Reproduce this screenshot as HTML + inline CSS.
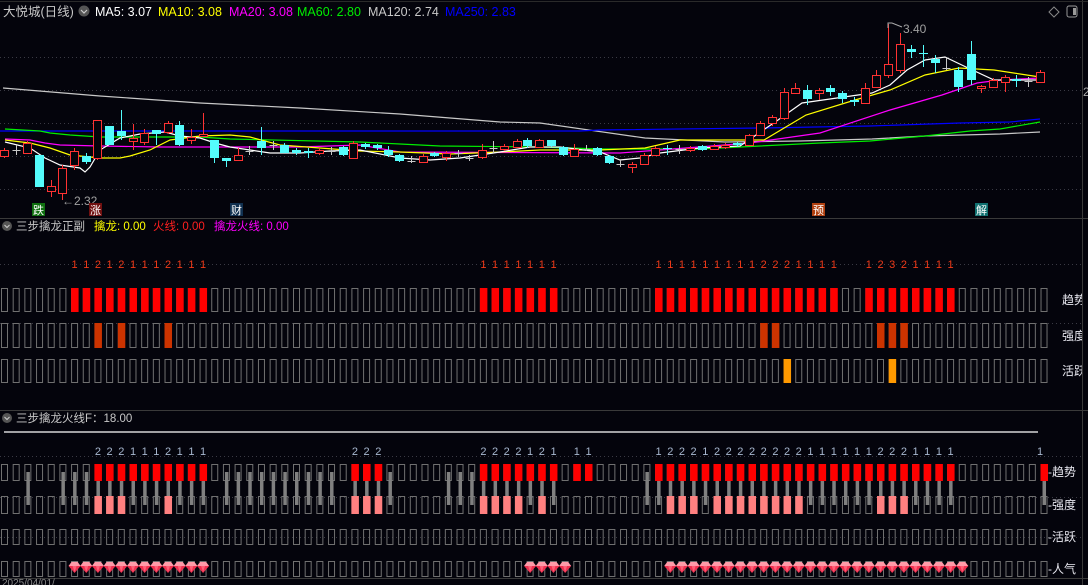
<!DOCTYPE html>
<html><head><meta charset="utf-8">
<style>
html,body{margin:0;padding:0;background:#04040c;overflow:hidden}
svg{display:block}
text{font-family:"Liberation Sans","Noto Sans CJK SC",sans-serif}
</style></head>
<body>
<svg id="s" width="1088" height="585" viewBox="0 0 1088 585" xmlns="http://www.w3.org/2000/svg">
<rect width="1088" height="585" fill="#04040c"/>
<g stroke="#3a3a44" stroke-dasharray="1,3" stroke-width="1">
<line x1="0" y1="57.5" x2="1082" y2="57.5"/>
<line x1="0" y1="90.5" x2="1082" y2="90.5"/>
<line x1="0" y1="123.5" x2="1082" y2="123.5"/>
<line x1="0" y1="156.5" x2="1082" y2="156.5"/>
<line x1="0" y1="189.5" x2="1082" y2="189.5"/>
<line x1="0" y1="264.5" x2="1082" y2="264.5"/>
<line x1="0" y1="323.5" x2="1082" y2="323.5"/>
<line x1="0" y1="456.5" x2="1082" y2="456.5"/>
<line x1="0" y1="497.5" x2="1082" y2="497.5"/>
<line x1="0" y1="537.5" x2="1082" y2="537.5"/>
</g>
<line x1="0" y1="218.5" x2="1088" y2="218.5" stroke="#3a3a3a"/>
<line x1="0" y1="410.5" x2="1088" y2="410.5" stroke="#3a3a3a"/>
<line x1="0" y1="578.5" x2="1088" y2="578.5" stroke="#3a3a3a"/>
<line x1="1082.5" y1="0" x2="1082.5" y2="585" stroke="#3a3a3a"/>
<line x1="0" y1="1.5" x2="1088" y2="1.5" stroke="#2a2a2a"/>

<g fill="none" stroke-width="1.2">
<polyline stroke="#c8c8c8" points="3,88 100,96 200,103 300,108 400,114 500,122 540,123 645,138 725,142 800,141 872,139 925,136 1000,134 1040,132"/>
<polyline stroke="#0000ff" points="0,131 580,131 600,130 760,128 870,126 960,123 1010,122 1040,119"/>
<polyline stroke="#00ee00" points="5,129 40,131 50,133 70,135 100,137 200,137 230,139 360,142 400,144 440,146 540,147 600,149 700,149 760,146 820,143 870,141 925,136 970,131 1000,129 1040,122"/>
<polyline stroke="#ff00ff" points="5,139 30,140 45,143 60,145 100,146 160,147 300,147 360,145 400,152 620,153 660,150 750,143 820,133 890,110 942,95 977,83 1000,80 1040,78"/>
<polyline stroke="#ffff00" points="5,140 30,143 50,148 70,155 100,158 120,158 130,156 150,150 170,140 200,136 230,135 250,137 280,145 320,148 360,151 400,152 450,154 500,152 540,150 600,150 645,148 680,140 764,140 806,115 855,100 890,90 925,75 959,68 994,70 1040,77"/>
<polyline stroke="#ffffff" points="5,142 30,148 45,158 60,165 80,168 85,172 90,167 100,150 120,138 140,134 165,132 180,136 200,138 215,143 230,147 250,150 270,153 300,153 330,151 360,150 400,158 430,160 460,158 500,152 530,147 560,147 600,152 620,160 640,158 660,153 700,148 740,146 778,120 802,103 844,97 872,93 890,85 907,70 925,60 945,57 966,67 994,80 1040,80"/>
</g>
<g id="candles"></g>

<text x="3" y="16" font-size="12.5" fill="#c8c8c8">大悦城(日线)</text>
<circle cx="84" cy="11" r="5.5" fill="#555"/>
<path d="M81 10 L84 13 L87 10" stroke="#ccc" fill="none" stroke-width="1.2"/>
<text x="95" y="16" font-size="12.5" fill="#ffffff">MA5: 3.07</text>
<text x="158" y="16" font-size="12.5" fill="#ffff00">MA10: 3.08</text>
<text x="229" y="16" font-size="12.5" fill="#ff00ff">MA20: 3.08</text>
<text x="297" y="16" font-size="12.5" fill="#00ee00">MA60: 2.80</text>
<text x="368" y="16" font-size="12.5" fill="#c8c8c8">MA120: 2.74</text>
<text x="445" y="16" font-size="12.5" fill="#0000ff">MA250: 2.83</text>
<path d="M1054 7 L1059 12 L1054 17 L1049 12 Z" stroke="#888" fill="none"/>
<rect x="1067" y="6" width="10" height="11" rx="2" stroke="#999" fill="none"/>
<rect x="1073" y="8" width="3" height="7" fill="#999"/>
<text x="1083" y="96" font-size="12" fill="#aaa">2</text>

<text x="62" y="205" font-size="12" fill="#a0a0a0">←2.32</text>
<path d="M888 28 L888 23 L892 23 L902 27" stroke="#aaa" fill="none"/>
<text x="903" y="33" font-size="12" fill="#a0a0a0">3.40</text>

<rect x="32" y="203" width="13" height="13" fill="#107010"/><text x="33" y="214" font-size="11" fill="#fff">跌</text>
<rect x="89" y="203" width="13" height="13" fill="#701010"/><text x="90" y="214" font-size="11" fill="#fff">涨</text>
<rect x="230" y="203" width="13" height="13" fill="#103050"/><text x="231" y="214" font-size="11" fill="#fff">财</text>
<rect x="812" y="203" width="13" height="13" fill="#b04010"/><text x="813" y="214" font-size="11" fill="#fff">预</text>
<rect x="975" y="203" width="13" height="13" fill="#107070"/><text x="976" y="214" font-size="11" fill="#fff">解</text>

<circle cx="7" cy="226" r="5" fill="#555"/>
<path d="M4.5 225 L7 227.5 L9.5 225" stroke="#ccc" fill="none"/>
<text x="16" y="230" font-size="11.5" fill="#c8c8c8">三步擒龙正副</text>
<text x="94" y="230" font-size="11.5" fill="#ffff00">擒龙: 0.00</text>
<text x="153" y="230" font-size="11.5" fill="#ff2020">火线: 0.00</text>
<text x="214" y="230" font-size="11.5" fill="#ff00ff">擒龙火线: 0.00</text>

<circle cx="7" cy="418" r="5" fill="#555"/>
<path d="M4.5 417 L7 419.5 L9.5 417" stroke="#ccc" fill="none"/>
<text x="16" y="422" font-size="11.5" fill="#c8c8c8">三步擒龙火线F：18.00</text>
<line x1="4" y1="432" x2="1038" y2="432" stroke="#ffffff" stroke-width="1.2"/>

<g id="boxes"></g>

<g font-size="11" fill="#f03a18" text-anchor="middle">
<text y="268" x="74.6 86.3 97.9 109.6 121.3 133.0 144.7 156.3 168.0 179.7 191.4 203.1">112121112111</text>
<text y="268" x="483.4 495.1 506.7 518.4 530.1 541.8 553.5">1111111</text>
<text y="268" x="658.6 670.3 681.9 693.6 705.3 717.0 728.7 740.3 752.0 763.7 775.4 787.1 798.7 810.4 822.1 833.8">1111111112221111</text>
<text y="268" x="868.8 880.5 892.2 903.9 915.5 927.2 938.9 950.6">12321111</text>
</g>
<g font-size="11" fill="#a8b8d0" text-anchor="middle">
<text y="455" x="97.9 109.6 121.3 133.0 144.7 156.3 168.0 179.7 191.4 203.1">2221112111</text>
<text y="455" x="354.9 366.6 378.3">222</text>
<text y="455" x="483.4 495.1 506.7 518.4 530.1 541.8 553.5">2222121</text>
<text y="455" x="576.8 588.5">11</text>
<text y="455" x="658.6 670.3 681.9 693.6 705.3 717.0 728.7 740.3 752.0 763.7 775.4 787.1 798.7 810.4 822.1 833.8 845.5 857.1 868.8 880.5 892.2 903.9 915.5 927.2 938.9 950.6">12221222222221111112221111</text>
<text y="455" x="1040">1</text>
</g>

<g font-size="12" fill="#e8e8f0">
<text x="1062" y="304">趋势</text>
<text x="1062" y="340">强度</text>
<text x="1062" y="375">活跃</text>
<text x="1048" y="476">-趋势</text>
<text x="1048" y="509">-强度</text>
<text x="1048" y="541">-活跃</text>
<text x="1048" y="573">-人气</text>
</g>
<rect x="1082" y="220" width="6" height="190" fill="#04040c"/>
<line x1="1082.5" y1="218" x2="1082.5" y2="585" stroke="#3a3a3a"/>
<text x="2" y="586" font-size="10" fill="#888">2025/04/01/</text>
</svg>
<script>
var NS="http://www.w3.org/2000/svg";
function el(p,t,a){var e=document.createElementNS(NS,t);for(var k in a)e.setAttribute(k,a[k]);p.appendChild(e);return e;}
var C=document.getElementById('candles');
var d=[[4,'r',150,156,148,158],[16,'g',150,150,145,155],[27,'r',143,153,141,154],[39,'c',155,187,155,187],[51,'r',186,191,180,197],[62,'r',168,193,165,200],[74,'r',151,165,148,170],[86,'c',156,162,153,164],[97,'r',120,158,120,160],[109,'c',126,145,126,145],[121,'c',131,136,110,140],[133,'r',138,141,124,150],[144,'r',133,142,129,145],[156,'c',130,134,130,145],[168,'r',123,132,121,134],[179,'c',125,145,121,146],[191,'r',137,140,129,144],[203,'r',134,136,113,137],[214,'c',140,158,140,163],[226,'c',158,161,158,167],[238,'r',155,160,148,161],[249,'g',151,151,146,155],[261,'c',141,148,127,155],[273,'g',145,145,141,150],[284,'c',145,153,143,153],[296,'c',150,153,148,155],[308,'c',151,153,148,158],[319,'r',150,153,148,155],[331,'g',151,151,147,155],[343,'c',147,155,146,156],[353,'r',143,158,141,159],[365,'c',144,147,143,149],[377,'c',145,148,144,150],[388,'c',150,155,146,157],[399,'c',155,161,154,162],[411,'g',161,161,156,163],[423,'r',156,162,154,163],[434,'c',153,156,152,157],[446,'r',153,157,151,161],[458,'g',153,153,150,157],[469,'g',158,158,155,161],[482,'r',150,157,144,159],[493,'g',148,148,141,153],[504,'r',146,149,144,151],[517,'r',141,147,139,148],[527,'c',140,146,138,148],[539,'r',140,147,139,148],[551,'c',140,146,140,147],[563,'c',147,155,146,156],[574,'r',149,156,144,157],[586,'g',149,149,145,151],[597,'c',148,155,147,156],[609,'c',156,163,155,164],[620,'g',164,164,160,167],[632,'r',164,167,162,173],[644,'r',155,164,153,165],[655,'r',148,155,146,156],[667,'c',148,149,145,155],[679,'g',149,149,145,154],[690,'r',148,150,146,152],[702,'c',146,150,145,151],[714,'r',146,149,144,150],[725,'r',145,147,143,149],[737,'c',143,145,142,147],[749,'r',135,145,134,146],[760,'r',123,135,121,136],[772,'r',117,123,115,126],[784,'r',92,118,88,120],[795,'r',88,93,83,94],[807,'c',90,99,85,105],[819,'r',90,93,88,100],[830,'c',88,92,85,96],[842,'c',93,99,91,103],[854,'c',100,102,97,106],[865,'r',88,103,83,104],[876,'r',75,87,70,88],[888,'r',64,75,24,78],[900,'r',44,70,33,73],[911,'c',49,52,45,58],[923,'c',53,54,45,67],[935,'c',59,63,55,73],[946,'g',68,68,58,70],[958,'c',70,87,67,92],[971,'c',54,80,41,85],[981,'r',86,88,85,93],[993,'r',80,87,78,88],[1005,'r',77,82,75,92],[1016,'c',79,81,75,87],[1028,'g',81,81,77,87],[1040,'r',72,82,70,83]];
d.forEach(function(c){
 var x=c[0],t=c[1];
 var col=t=='r'?'#ff3232':(t=='c'?'#54fcfc':'#c8c8c8');
 el(C,'line',{x1:x+.5,y1:c[4],x2:x+.5,y2:c[5],stroke:col});
 if(t=='g'){el(C,'line',{x1:x-3.5,y1:c[2]+.5,x2:x+4.5,y2:c[2]+.5,stroke:col});}
 else if(t=='r'){el(C,'rect',{x:x-3.5,y:c[2]+.5,width:8,height:Math.max(1,c[3]-c[2]),fill:'#04040c',stroke:col});}
 else{el(C,'rect',{x:x-4,y:c[2],width:9,height:Math.max(1,c[3]-c[2]),fill:col});}
});
var B=document.getElementById('boxes');
function cx(i){return 4.5+11.68*i;}
function outline(y,h){for(var i=0;i<=89;i++){el(B,'rect',{x:cx(i)-3,y:y+.5,width:6,height:h-1,fill:'none',stroke:'#707070'});}}
function fill(cols,y,h,c){cols.forEach(function(i){el(B,'rect',{x:cx(i)-3.5,y:y,width:7.5,height:h,fill:c});});}
function rng(a,b){var r=[];for(var i=a;i<=b;i++)r.push(i);return r;}
outline(288,24);outline(323,25);outline(359,24);
var p1=[].concat(rng(6,17),rng(41,47),rng(56,71),rng(74,81));
fill(p1,288,24,'#ff0000');
fill([8,10,14,65,66,75,76,77],323,25,'#cc3300');
fill([67,76],359,24,'#ff9900');
outline(464,17);outline(496,18);outline(529,16);outline(561,16);
var gb=[].concat([2,5,6,7],rng(8,17),rng(19,28),rng(30,33),rng(38,47),rng(55,81),[89]);
gb.forEach(function(i){el(B,'rect',{x:cx(i)-1.5,y:472,width:3.5,height:33,fill:'#808080'});});
fill([].concat(rng(8,17),rng(30,32),rng(41,47),[49,50],rng(56,81),[89]),464,17,'#ff0000');
fill([8,9,10,14,30,31,32,41,42,43,44,46,57,58,59].concat(rng(61,68),[75,76,77]),496,18,'#ff8080');
var dm=[].concat(rng(6,17),rng(45,48),rng(57,82));
dm.forEach(function(i){var x=cx(i);
 el(B,'polygon',{points:(x-6)+',566 '+(x-3)+',562 '+(x+3)+',562 '+(x+6)+',566 '+x+',573',fill:'#f03050'});
 el(B,'polygon',{points:(x-6)+',566 '+(x-3)+',562 '+(x+3)+',562 '+(x+6)+',566',fill:'#ff9aa8'});
 el(B,'polygon',{points:(x-2)+',566 '+(x+2)+',566 '+x+',572',fill:'#ff6078'});
});
</script>
</body></html>
